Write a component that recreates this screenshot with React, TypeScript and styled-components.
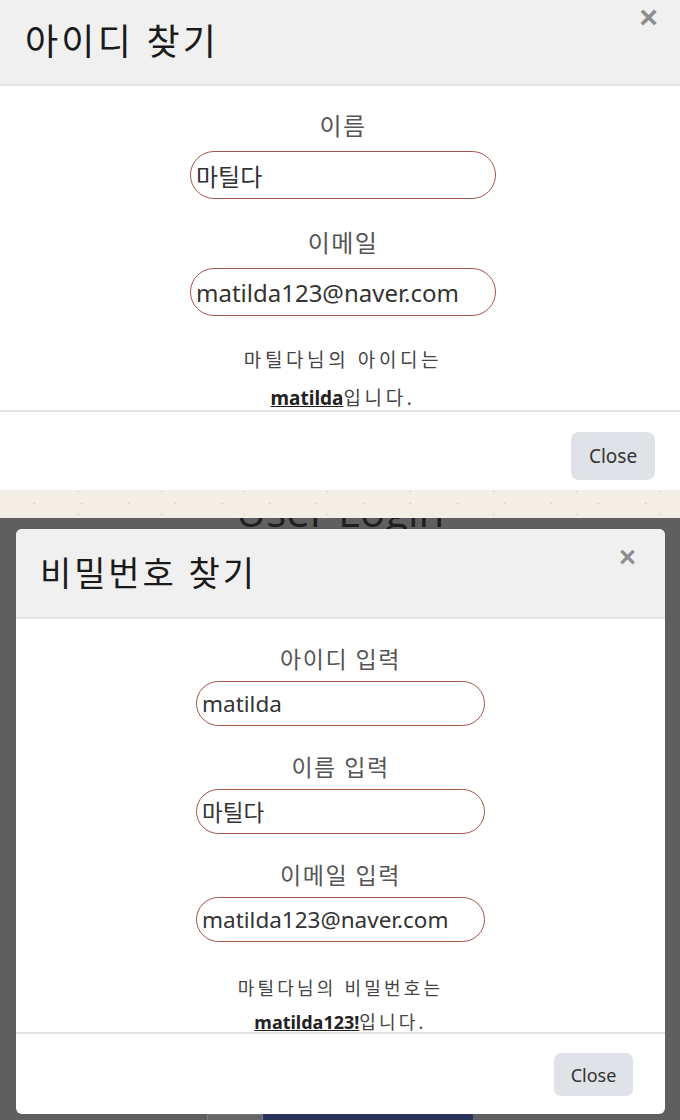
import React from "react";
import styled, { createGlobalStyle, css } from "styled-components";

const GlobalStyle = createGlobalStyle`
  html, body { margin: 0; padding: 0; background: #ffffff; }
  body { font-family: "Noto Sans", "Noto Sans CJK KR", sans-serif; }
  * { box-sizing: border-box; }
`;

type Size = "lg" | "sm";

const sizes = {
  lg: {
    headerH: 84, headerPadL: 25, titleFont: 36, titleLS: 3.2, closeFont: 32, closeTop: 1, closeRight: 22,
    bodyH: 324, bodyPadT: 22, bodyPadL: 6,
    labelFont: 24, labelLH: 36, labelMB: 7, labelMT: 26, labelLS: 1.5,
    inputW: 306, inputH: 48, inputFont: 24,
    resultMT: 25, resultLH: 38, resultFont: 19, resultLS: 3.6,
    footerH: 78, footerPadT: 20, footerPadR: 25,
    btnW: 84, btnH: 48, btnFont: 19, btnRadius: 8,
  },
  sm: {
    headerH: 88, headerPadL: 24, titleFont: 34, titleLS: 2.9, closeFont: 29, closeTop: 14, closeRight: 29,
    bodyH: 413, bodyPadT: 23, bodyPadL: 0,
    labelFont: 23, labelLH: 34, labelMB: 5, labelMT: 24, labelLS: 1.5,
    inputW: 289, inputH: 45, inputFont: 22.5,
    resultMT: 29, resultLH: 34, resultFont: 18, resultLS: 3.2,
    footerH: 80, footerPadT: 19, footerPadR: 32,
    btnW: 79, btnH: 43, btnFont: 18, btnRadius: 7,
  },
};

const Page = styled.div`
  width: 680px;
  height: 1120px;
  overflow: hidden;
  display: flex;
  flex-direction: column;
`;

const ModalBox = styled.div<{ $size: Size }>`
  background: #ffffff;
  display: flex;
  flex-direction: column;
  flex-shrink: 0;
  ${({ $size }) =>
    $size === "lg"
      ? css`
          width: 680px;
        `
      : css`
          width: 649px;
          margin-left: 16px;
          border-radius: 6px;
          overflow: hidden;
        `}
`;

const Header = styled.div<{ $size: Size }>`
  display: flex;
  align-items: center;
  background: #f0f0f0;
  border-bottom: 2px solid #e4e4e4;
  height: ${({ $size }) => sizes[$size].headerH + 2}px;
  padding-left: ${({ $size }) => sizes[$size].headerPadL}px;
  padding-right: ${({ $size }) => sizes[$size].closeRight}px;
`;

const Title = styled.h2<{ $size: Size }>`
  margin: 0;
  font-weight: 400;
  color: #1a1a1a;
  font-size: ${({ $size }) => sizes[$size].titleFont}px;
  letter-spacing: ${({ $size }) => sizes[$size].titleLS}px;
  line-height: 1.2;
`;

const CloseX = styled.span<{ $size: Size }>`
  margin-left: auto;
  align-self: flex-start;
  font-family: "Liberation Sans", Arial, sans-serif;
  font-weight: 700;
  color: #8e8e8e;
  line-height: 1;
  font-size: ${({ $size }) => sizes[$size].closeFont}px;
  margin-top: ${({ $size }) => sizes[$size].closeTop}px;
`;

const Body = styled.div<{ $size: Size }>`
  display: flex;
  flex-direction: column;
  align-items: center;
  overflow: hidden;
  height: ${({ $size }) => sizes[$size].bodyH}px;
  padding-top: ${({ $size }) => sizes[$size].bodyPadT}px;
  padding-left: ${({ $size }) => sizes[$size].bodyPadL}px;
`;

const Label = styled.label<{ $size: Size; $first: boolean }>`
  display: block;
  color: #555555;
  font-size: ${({ $size }) => sizes[$size].labelFont}px;
  line-height: ${({ $size }) => sizes[$size].labelLH}px;
  letter-spacing: ${({ $size }) => sizes[$size].labelLS}px;
  margin-bottom: ${({ $size }) => sizes[$size].labelMB}px;
  margin-top: ${({ $size, $first }) => ($first ? 0 : sizes[$size].labelMT)}px;
`;

const Field = styled.input<{ $size: Size }>`
  display: block;
  flex-shrink: 0;
  font-family: "Noto Sans", "Noto Sans CJK KR", sans-serif;
  color: #333333;
  background: #ffffff;
  border: 1.5px solid #a5574f;
  outline: none;
  padding: 0 5px;
  width: ${({ $size }) => sizes[$size].inputW}px;
  height: ${({ $size }) => sizes[$size].inputH}px;
  border-radius: ${({ $size }) => sizes[$size].inputH / 2}px;
  font-size: ${({ $size }) => sizes[$size].inputFont}px;
`;

const Result = styled.p<{ $size: Size }>`
  margin: 0;
  text-align: center;
  color: #444444;
  flex-shrink: 0;
  font-size: ${({ $size }) => sizes[$size].resultFont}px;
  letter-spacing: ${({ $size }) => sizes[$size].resultLS}px;
  line-height: ${({ $size }) => sizes[$size].resultLH}px;
  margin-top: ${({ $size }) => sizes[$size].resultMT}px;
`;

const Answer = styled.strong`
  color: #222222;
  font-weight: 700;
  text-decoration: underline;
  letter-spacing: 0;
`;

const Footer = styled.div<{ $size: Size }>`
  display: flex;
  justify-content: flex-end;
  align-items: flex-start;
  border-top: 2px solid #e2e4e7;
  height: ${({ $size }) => sizes[$size].footerH + 2}px;
  padding-top: ${({ $size }) => sizes[$size].footerPadT}px;
  padding-right: ${({ $size }) => sizes[$size].footerPadR}px;
`;

const CloseButton = styled.button<{ $size: Size }>`
  font-family: "Noto Sans", sans-serif;
  background: #dfe2e6;
  color: #333333;
  border: none;
  padding: 0;
  width: ${({ $size }) => sizes[$size].btnW}px;
  height: ${({ $size }) => sizes[$size].btnH}px;
  border-radius: ${({ $size }) => sizes[$size].btnRadius}px;
  font-size: ${({ $size }) => sizes[$size].btnFont}px;
`;

const BeigeStrip = styled.div`
  height: 28px;
  flex-shrink: 0;
  background-color: #f3efe4;
  background-image:
    radial-gradient(circle, rgba(120, 110, 90, 0.18) 0.8px, transparent 1.4px),
    radial-gradient(circle, rgba(120, 110, 90, 0.12) 0.8px, transparent 1.4px);
  background-size: 47px 19px, 83px 23px;
  background-position: 11px 4px, 37px 13px;
`;

const Overlay = styled.div`
  flex: 1;
  background: #5f5f5f;
  display: flex;
  flex-direction: column;
`;

const LoginPeek = styled.div`
  height: 11px;
  overflow: hidden;
  display: flex;
  justify-content: center;
  flex-shrink: 0;
`;

const LoginText = styled.div`
  font-family: "Open Sans", sans-serif;
  font-size: 42px;
  line-height: 42px;
  margin-top: -28px;
  color: #1f1f1f;
`;

const UnderStrip = styled.div`
  display: flex;
  height: 6px;
  flex-shrink: 0;
  padding-left: 207px;
`;

const UnderButton = styled.div<{ $w: number; $bg: string; $border: string }>`
  width: ${({ $w }) => $w}px;
  background: ${({ $bg }) => $bg};
  border: 1px solid ${({ $border }) => $border};
  border-bottom: none;
`;

type FieldData = { label: string; value: string };

function FindModal({
  size,
  title,
  fields,
  lead,
  answer,
}: {
  size: Size;
  title: string;
  fields: FieldData[];
  lead: string;
  answer: string;
}) {
  return (
    <ModalBox $size={size}>
      <Header $size={size}>
        <Title $size={size}>{title}</Title>
        <CloseX $size={size}>×</CloseX>
      </Header>
      <Body $size={size}>
        {fields.map((f, i) => (
          <React.Fragment key={f.label}>
            <Label $size={size} $first={i === 0}>
              {f.label}
            </Label>
            <Field $size={size} readOnly value={f.value} />
          </React.Fragment>
        ))}
        <Result $size={size}>
          {lead}
          <br />
          <Answer>{answer}</Answer>입니다.
        </Result>
      </Body>
      <Footer $size={size}>
        <CloseButton $size={size}>Close</CloseButton>
      </Footer>
    </ModalBox>
  );
}

export default function App() {
  return (
    <Page>
      <GlobalStyle />
      <FindModal
        size="lg"
        title="아이디 찾기"
        fields={[
          { label: "이름", value: "마틸다" },
          { label: "이메일", value: "matilda123@naver.com" },
        ]}
        lead="마틸다님의 아이디는"
        answer="matilda"
      />
      <BeigeStrip />
      <Overlay>
        <LoginPeek>
          <LoginText>User Login</LoginText>
        </LoginPeek>
        <FindModal
          size="sm"
          title="비밀번호 찾기"
          fields={[
            { label: "아이디 입력", value: "matilda" },
            { label: "이름 입력", value: "마틸다" },
            { label: "이메일 입력", value: "matilda123@naver.com" },
          ]}
          lead="마틸다님의 비밀번호는"
          answer="matilda123!"
        />
        <UnderStrip>
          <UnderButton $w={56} $bg="#676767" $border="#7a7a7a" />
          <UnderButton $w={210} $bg="#27335a" $border="#2b3760" />
        </UnderStrip>
      </Overlay>
    </Page>
  );
}
